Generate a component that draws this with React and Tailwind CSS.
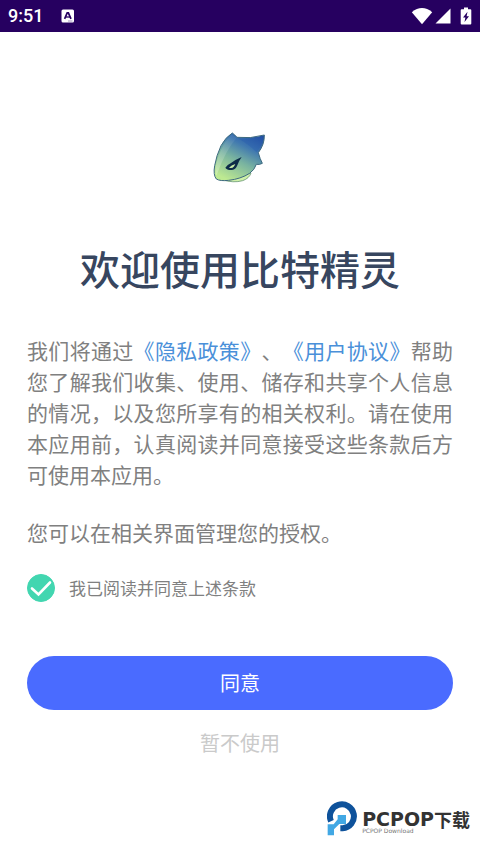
import { useState } from "react";

// Status bar at the top of the phone
const StatusBar = () => (
  <header className="flex h-8 items-center justify-between bg-[#260060] px-2 text-white">
    <div className="flex items-center gap-[18px]">
      <span className="font-['Roboto',sans-serif] text-lg font-medium">9:51</span>
      <svg viewBox="0 0 14 14" className="h-[14px] w-[14px]" aria-hidden="true">
        <rect x="0.5" y="0.5" width="12.5" height="13" rx="1.5" fill="#fff" />
        <path d="M3.6 9.8 6.2 3.8h1.2l2.6 6" fill="none" stroke="#260060" strokeWidth="1.7" />
        <path d="M4.8 8h4.2" stroke="#260060" strokeWidth="1.3" />
        <path d="M7 12h4.5" stroke="#8a78ad" strokeWidth="0.8" />
      </svg>
    </div>
    <div className="flex items-center">
      {/* wifi */}
      <svg viewBox="0 0 22 18" className="h-[18px] w-[22px]" aria-hidden="true">
        <path d="M0.8 5.2Q11-3.2 21.2 5.2L11 17.2Z" fill="#fff" />
      </svg>
      {/* signal */}
      <svg viewBox="0 0 16 16" className="ml-[2px] h-4 w-4" aria-hidden="true">
        <path d="M0.5 15.5 15.5 0.5v15Z" fill="#fff" />
      </svg>
      {/* battery */}
      <svg viewBox="0 0 12 18" className="ml-[9px] h-[18px] w-3" aria-hidden="true">
        <path d="M4 0.5h4v1.7h2.3q1 0 1 1v13.3q0 1-1 1H1.7q-1 0-1-1V3.2q0-1 1-1H4Z" fill="#fff" />
        <path d="M7.5 4.8 3 10.6h2.4L4.5 15 9 9.2H6.6Z" fill="#260060" />
      </svg>
    </div>
  </header>
);

// App logo, the spirit head
const SpiritLogo = () => (
  <svg viewBox="0 -3 180 180" className="h-15 w-15" role="img" aria-label="比特精灵">
    <defs>
      <linearGradient id="head" x1="0.85" y1="0" x2="0.3" y2="1">
        <stop offset="0" stopColor="#2450a2" />
        <stop offset="0.3" stopColor="#3f77b0" />
        <stop offset="0.6" stopColor="#79b3a0" />
        <stop offset="1" stopColor="#bde991" />
      </linearGradient>
      <linearGradient id="shine" x1="0.6" y1="0" x2="0.3" y2="1">
        <stop offset="0" stopColor="#fff" stopOpacity="0.05" />
        <stop offset="1" stopColor="#fff" stopOpacity="0.25" />
      </linearGradient>
    </defs>
    {/* lower jaw */}
    <path d="M36 152Q70 163 98 155Q118 148 123 132L100 136Z" fill="#cdf0a8" stroke="#6d9a78" strokeWidth="2.5" />
    <path
      d="M67 12Q75 18 81 25Q120 30 163 18Q164 46 145 71Q150 90 157 103Q148 108 139 106Q134 122 119 133Q92 150 56 154Q30 157 19 150Q9 138 14 110Q19 80 33 50Q47 24 67 12Z"
      fill="url(#head)"
      stroke="#3d6a80"
      strokeWidth="3"
      strokeLinejoin="round"
    />
    <path d="M65 17Q73 22 79 28Q48 62 19 140Q12 118 26 80Q42 38 65 17Z" fill="url(#shine)" />
    <path d="M84 28Q124 33 159 22Q158 48 140 70Q118 48 84 28Z" fill="#1b50b0" opacity="0.25" />
    {/* eye */}
    <path d="M95 84Q76 92 63 102Q52 107 46 116Q51 124 66 123Q78 121 82 109Q85 98 95 84Z" fill="#0d2c48" />
    <path d="M76 105Q64 109 57 116Q67 119 71 113Q74 110 76 105Z" fill="#c8eca8" />
  </svg>
);

// Download site mark in the bottom corner
const PcpopMark = () => (
  <div className="flex items-center gap-[3px] self-end">
    <svg viewBox="0 0 96 108" className="h-9 w-8" aria-hidden="true">
      <path d="M12 64A36 36 0 1 1 47 85H40" fill="none" stroke="#0e529b" strokeWidth="18" />
      <path d="M2 73H20L32 58V45H57V72H37L21 88V106H2Z" fill="#42a8e4" />
    </svg>
    <div className="pt-2">
      <div className="flex items-center whitespace-nowrap font-bold leading-[18px] text-[#333]">
        <span className="font-['DejaVu_Sans',sans-serif] text-[19px]">PCPOP</span>
        <span className="text-lg leading-[18px]">下载</span>
      </div>
      <div className="font-['DejaVu_Sans',sans-serif] text-[6px] leading-[6px] text-[#777]">PCPOP Download</div>
    </div>
  </div>
);

const App = () => {
  const [agreed, setAgreed] = useState(true);

  return (
    <div className="flex min-h-screen flex-col bg-white font-['Noto_Sans_CJK_SC',sans-serif]" lang="zh-CN">
      <StatusBar />

      <main className="flex flex-1 flex-col px-[27px] pt-24">
        <div className="flex justify-center">
          <SpiritLogo />
        </div>
        <h1 className="mt-14 text-center text-[40px] font-medium leading-[48px] text-[#37465f]">
          欢迎使用比特精灵
        </h1>

        <div className="mt-[43px] flex flex-col gap-[27px] text-justify text-[21px] leading-[31px] text-[#808080] [text-spacing-trim:space-all]">
          <p>
            我们将通过
            <a href="#privacy" className="text-[#4a90d9]">《隐私政策》</a>、
            <a href="#terms" className="text-[#4a90d9]">《用户协议》</a>
            帮助您了解我们收集、使用、储存和共享个人信息的情况，以及您所享有的相关权利。请在使用本应用前，认真阅读并同意接受这些条款后方可使用本应用。
          </p>
          <p>您可以在相关界面管理您的授权。</p>
        </div>

        <label className="mt-[26px] flex items-center gap-[14px] text-[17px] leading-7 text-[#808080]">
          <span className="grid h-7 w-7 place-items-center">
            <input
              type="checkbox"
              checked={agreed}
              onChange={(e) => setAgreed(e.target.checked)}
              className="peer col-start-1 row-start-1 h-7 w-7 appearance-none rounded-full border border-[#42d6b0] checked:bg-[#42d6b0]"
            />
            <svg
              viewBox="0 0 28 28"
              className="pointer-events-none invisible col-start-1 row-start-1 h-7 w-7 peer-checked:visible"
              aria-hidden="true"
            >
              <path d="m5 14.5 6.5 6L23 8.5" fill="none" stroke="#fff" strokeWidth="2.6" strokeLinecap="round" />
            </svg>
          </span>
          我已阅读并同意上述条款
        </label>

        <button type="button" className="mt-[54px] h-[54px] rounded-full bg-[#4a6bff] text-xl text-white">
          同意
        </button>
        <button type="button" className="mt-[17px] self-center text-xl leading-8 text-[#cacaca]">
          暂不使用
        </button>
      </main>

      <footer className="flex flex-col px-[10px] pb-4 pt-6">
        <PcpopMark />
      </footer>
    </div>
  );
};

export default App;
